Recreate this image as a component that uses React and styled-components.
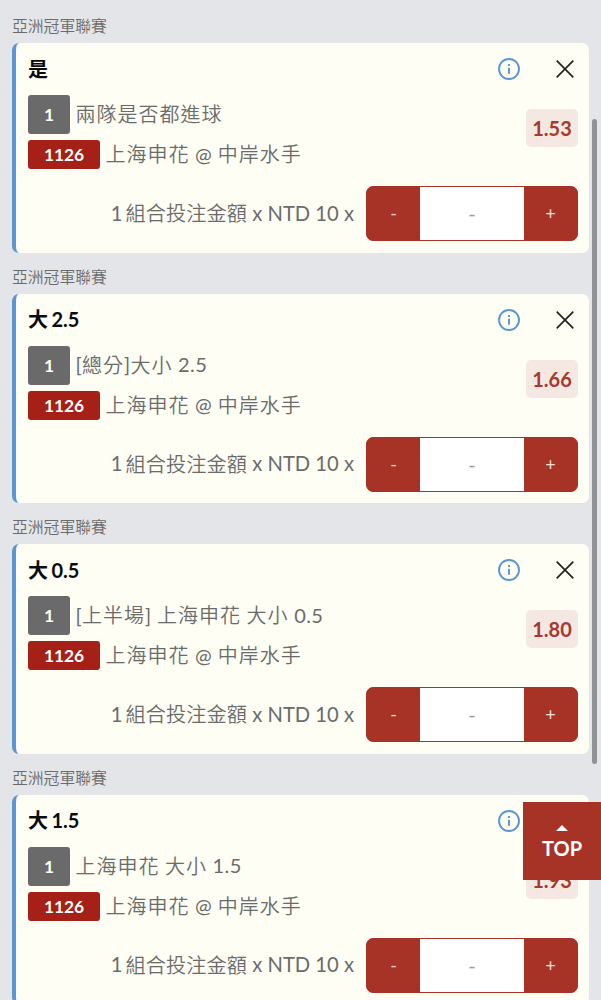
import React from 'react';
import styled, {createGlobalStyle} from 'styled-components';

const GlobalStyle = createGlobalStyle`
    * {
        box-sizing: border-box;
    }
    body {
        margin: 0;
        background-color: #e4e5e8;
        overflow: hidden;
        font-family: Lato, "Noto Sans CJK TC DemiLight", "Noto Sans CJK TC", sans-serif;
    }
`;

const Slip = styled.main`
    height: 1000px;
    padding: 2px 12px 0;
    overflow: hidden;
    color: #6b6b6b;
`;

const League = styled.div`
    height: 41px;
    line-height: 47px;
    font-size: 15.8px;
    font-weight: 350;
    font-family: "Noto Sans CJK TC", sans-serif;
`;

const Card = styled.section`
    height: 209.6px;
    padding: 10px 11px 11px 12px;
    border-left: 4px solid #5b96d0;
    border-radius: 7px;
    background-color: #fefef5;
`;

const Header = styled.header`
    display: flex;
    align-items: center;
    height: 32px;
`;

const Title = styled.h2`
    flex: 1;
    margin: 0;
    font-family: Lato, "Noto Sans CJK TC", sans-serif;
    font-size: 20px;
    font-weight: 700;
    line-height: 31px;
    color: #0b0b0b;
    word-spacing: -1.4px;
`;

const IconButton = styled.button`
    display: flex;
    padding: 0;
    margin-left: ${(props)=>props.$gap || 0}px;
    border: 0;
    background: none;
`;

const Body = styled.div`
    display: flex;
    align-items: flex-start;
    justify-content: space-between;
    margin-top: 10px;
`;

const Line = styled.div`
    display: flex;
    align-items: center;
    height: ${(props)=>props.$height}px;
    margin-bottom: 6px;
    font-size: 20px;
    letter-spacing: 1px;
    white-space: pre;
`;

const Label = styled.span`
    padding-bottom: 2px;
    font-weight: ${(props)=>props.$weight || 350};
    letter-spacing: ${(props)=>props.$spacing ?? 1}px;
`;

const Badge = styled.span`
    display: flex;
    align-items: center;
    justify-content: center;
    width: ${(props)=>props.$width}px;
    height: 100%;
    margin-right: 5.5px;
    border-radius: 3px;
    background-color: ${(props)=>props.$color};
    color: #fff;
    font-size: 17.4px;
    font-weight: 700;
    letter-spacing: -0.1px;
`;

const Odds = styled.strong`
    width: 52px;
    height: 38px;
    margin-top: 14px;
    border-radius: 5px;
    background-color: #f5e7e1;
    color: #a63a2d;
    font-size: 20px;
    font-weight: 700;
    line-height: 38px;
    text-align: center;
`;

const Bet = styled.div`
    display: flex;
    align-items: center;
    justify-content: flex-end;
    margin-top: 11px;
    font-size: 20.2px;
    white-space: pre;
`;

const Count = styled(Label)`
    margin-right: 3px;
`;

const Stepper = styled.div`
    display: flex;
    width: 212px;
    height: 55px;
    margin-left: 12px;
    border: 1px solid #a73327;
    border-radius: 7px;
    background-color: #a73327;
    overflow: hidden;
`;

const Step = styled.button`
    width: 53px;
    padding: 0 0 1px;
    border: 0;
    background-color: #a73327;
    color: #f6ded9;
    font: 400 18px Lato, sans-serif;
`;

const Amount = styled.div`
    flex: 1;
    background-color: #fff;
    color: #999;
    font-size: 20px;
    line-height: 53px;
    text-align: center;
`;

const Scrollbar = styled.div`
    position: fixed;
    top: 119px;
    right: 4px;
    width: 5px;
    height: 645px;
    border-radius: 3px;
    background-color: #919294;
`;

const TopButton = styled.button`
    position: fixed;
    top: 802px;
    right: 0;
    display: flex;
    flex-direction: column;
    align-items: center;
    width: 78px;
    height: 78px;
    padding: 23px 0 0;
    border: 0;
    background-color: #a73327;
    color: #fff;
    font: 700 20px/24px Lato, sans-serif;

    svg {
        margin-bottom: 5px;
    }
`;

const bets = [
    {id: 1, title: '是', market: '兩隊是否都進球', odds: '1.53'},
    {id: 2, title: '大 2.5', market: '[總分]大小 2.5', odds: '1.66'},
    {id: 3, title: '大 0.5', market: '[上半場] 上海申花 大小 0.5', odds: '1.80'},
    {id: 4, title: '大 1.5', market: '上海申花 大小 1.5', odds: '1.93'},
];

function InfoIcon() {
    return (
        <svg width="22" height="22" viewBox="0 0 22 22" fill="none" stroke="#5b96d0" strokeWidth="1.9">
            <circle cx="11" cy="11" r="10" />
            <path d="M11 9.7v6.1M11 6v2" />
        </svg>
    );
}

function CloseIcon() {
    return (
        <svg width="18" height="18" viewBox="0 0 18 18" fill="none" stroke="#222" strokeWidth="1.7">
            <path d="M.7.7l16.6 16.6M17.3.7.7 17.3" />
        </svg>
    );
}

function BetItem({title, market, odds}) {
    // light weight for the Chinese runs, regular for the Latin ones
    const runs = (text)=> text.split(/([\u4e00-\u9fff]+)/).filter(Boolean).map((run, i)=> {
        const chinese = /[\u4e00-\u9fff]/.test(run);
        return <Label key={i} $weight={chinese ? 350 : 400} $spacing={chinese ? 1 : 0.4}>{run}</Label>;
    });

    return (<>
        <League>亞洲冠軍聯賽</League>
        <Card>
            <Header>
                <Title>{title}</Title>
                <IconButton aria-label="info"><InfoIcon /></IconButton>
                <IconButton aria-label="close" $gap={36}><CloseIcon /></IconButton>
                <span style={{width: 4}} />
            </Header>
            <Body>
                <div>
                    <Line $height={39}><Badge $width={42} $color="#6a6a6a">1</Badge>{runs(market)}</Line>
                    <Line $height={29}><Badge $width={72} $color="#a52017">1126</Badge>{runs('上海申花 @ 中岸水手')}</Line>
                </div>
                <Odds>{odds}</Odds>
            </Body>
            <Bet>
                <Count $weight={400} $spacing={0}>1</Count>
                <Label $spacing={0.1}>組合投注金額</Label>
                <Label $weight={400} $spacing={0}> x NTD 10 x</Label>
                <Stepper>
                    <Step>-</Step>
                    <Amount>-</Amount>
                    <Step>+</Step>
                </Stepper>
            </Bet>
        </Card>
    </>);
}

export default function App() {
    return (<>
        <GlobalStyle />
        <Slip>
            {bets.map((bet)=> <BetItem key={bet.id} {...bet} />)}
        </Slip>
        <Scrollbar />
        <TopButton>
            <svg width="12" height="6" viewBox="0 0 12 6" fill="#fff"><path d="M6 0l6 6H0z" /></svg>
            TOP
        </TopButton>
    </>);
}
